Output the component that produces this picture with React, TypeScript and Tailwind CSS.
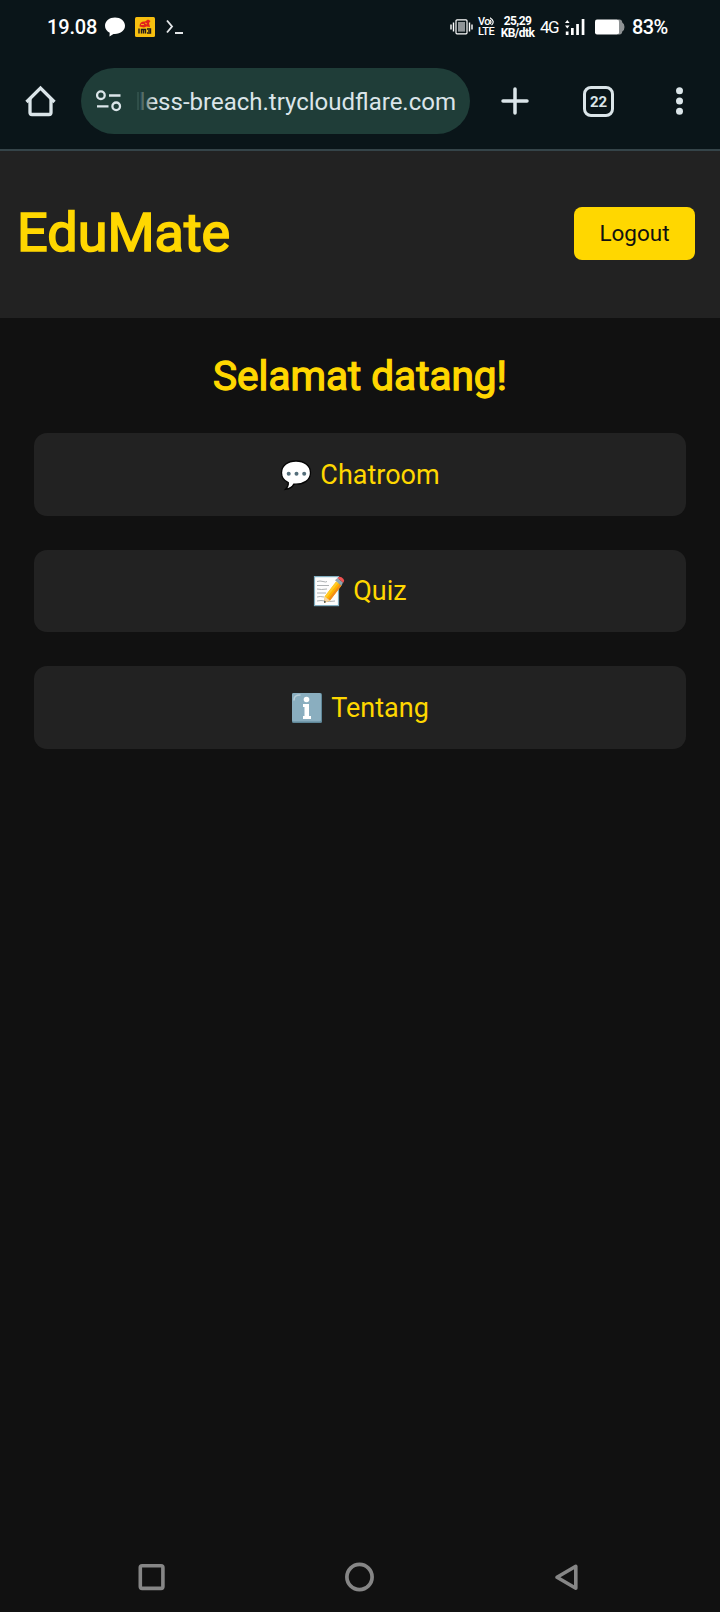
import React from "react";

const menuItems = [
  { label: "Chatroom", icon: <ChatIcon /> },
  { label: "Quiz", icon: <MemoIcon /> },
  { label: "Tentang", icon: <InfoIcon /> },
];

function ChatIcon() {
  return (
    <svg width="32" height="32" viewBox="0 0 32 32">
      <path
        d="M16 2C7.500 2 1.500 6.800 1.500 13.800c0 4.500 2.500 8 6.800 9.900.2 2.700-.8 4.700-2.800 6.600 4-.4 7-2.500 8.300-5.200 10.200.8 16.700-4.300 16.700-11.300C30.500 6.800 24.500 2 16 2z"
        fill="#fff"
        stroke="#050505"
        strokeWidth="1.300"
      />
      <circle cx="8.700" cy="14.700" r="2" fill="#546e7a" />
      <circle cx="16.500" cy="14.700" r="2" fill="#546e7a" />
      <circle cx="24.200" cy="14.700" r="2" fill="#546e7a" />
    </svg>
  );
}

function MemoIcon() {
  return (
    <svg width="32" height="32" viewBox="0 0 32 32">
      <rect x="1.500" y="1.600" width="24" height="29" fill="#fdfdfd" stroke="#82aec0" strokeWidth="1.200" />
      <g stroke="#a3a7a9" strokeWidth="0.900" fill="none">
        <path d="M4 6.500q3 -1 6 0t4 0M4 10.500h12M4 14q4 1 10 0M4 18h9M4 22q3 -1 7 0M4 26q4 -1 8 0t10 0" />
      </g>
      <path d="M23.200 6.500 28.500 10.500 17 25.500 11 28 11.700 21.500z" fill="#ffb300" />
      <path d="M23.200 6.500 25 7.900 13.500 23 11.700 21.500z" fill="#ffca28" />
      <path d="M26.800 9.200 28.500 10.500 17 25.500 15.200 24.200z" fill="#f28c1a" />
      <path d="M11.700 21.500 17 25.500 11 28z" fill="#f3d3a2" />
      <path d="M11.300 25.500 13.200 27 11 28z" fill="#37474f" />
      <path d="M22 5.200 24.500 3 30 7.500 28.500 10.700z" fill="#90a4ae" />
      <path d="M24.500 3Q26 .8 28.500 2.200L30.500 4Q32 5.800 30.300 7.700z" fill="#f05252" />
    </svg>
  );
}

function InfoIcon() {
  return (
    <svg width="32" height="32" viewBox="0 0 32 32">
      <rect x="1" y="1" width="30" height="30" rx="1.500" fill="#5f8798" />
      <rect x="1" y="1" width="29" height="28.500" rx="1.500" fill="#8aaebf" />
      <path d="M3 8Q3 3 9 3" stroke="#b9ced8" strokeWidth="1.600" fill="none" strokeLinecap="round" />
      <circle cx="15.500" cy="7.500" r="2.800" fill="#fff" />
      <path d="M12 12h6v12h2v3h-8v-3h1.500v-9H12z" fill="#fff" />
    </svg>
  );
}

const StatusBar = () => (
  <div className="flex h-[54px] items-center pl-[47px] text-white">
    <div className="w-[58px] text-[20px] leading-none font-medium tracking-[-0.150px]">19.08</div>
    <svg className="mr-[10px]" width="20" height="20" viewBox="0 0 20 20" fill="#fff">
      <path d="M10 .5C4.500.500 0 4 0 8.800c0 3 1.800 5.600 4.700 7L4.500 19.500l4-2.600C15 17.500 20 13.800 20 8.800 20 4 15.500.500 10 .5z" />
    </svg>
    <svg className="mr-[11px]" width="20" height="20" viewBox="0 0 20 20">
      <rect width="20" height="20" rx="1.500" fill="#f7bf0f" />
      <path d="M4.500 9.500C4.500 5.500 7 4 10 4.500L13 2.500 15.500 4 14 6 15 10 11.500 9.500 9 10.500z" fill="#e3221b" />
      <path d="M6 7.500h3M10 6l2 1" stroke="#f7bf0f" strokeWidth="0.900" />
      <path d="M4 11.500v5M6.500 16.500v-4h4v4M8.500 12.500v4M12 12h3.500v4H12M13 14h2" stroke="#231a1a" strokeWidth="1.400" fill="none" />
    </svg>
    <svg width="18" height="16" viewBox="0 0 18 16" fill="none" stroke="#e3e6e8" strokeWidth="1.900">
      <path d="M1 1.500 6 7.500 1 13.500M9 14h8" />
    </svg>

    <svg className="mr-[5px] ml-[266px]" width="23" height="18" viewBox="0 0 23 18">
      <rect x="6" y="1.800" width="11" height="14" rx="1" fill="#0a1519" stroke="#fff" strokeWidth="1.200" />
      <rect x="8" y="4" width="7" height="9.600" fill="#909598" />
      <path d="M1 6.500v5M3.500 4.500v9M19.500 4.500v9M22 6.500v5" stroke="#fff" strokeWidth="1.400" />
    </svg>
    <div className="flex w-[22px] flex-col text-[11px] leading-[10px] font-medium">
      <div className="flex">
        <span className="tracking-[-0.700px]">Vo</span>
        <svg width="6" height="9" viewBox="0 0 6 9" fill="none" stroke="#fff" strokeWidth="1.200">
          <path d="M0 3q2 2 0 4M0 .8q5.500 3.400 1.500 7.400" />
        </svg>
      </div>
      <span className="tracking-[-0.400px]">LTE</span>
    </div>
    <div className="w-[35px] pb-px text-center text-[12px] leading-[12px] font-bold tracking-[-0.550px]">
      <div>25,29</div>
      <div>KB/dtk</div>
    </div>
    <div className="ml-[5px] w-[25px] text-[17px] leading-none tracking-[-1.500px]">4G</div>
    <svg width="20" height="18" viewBox="0 0 20 18" fill="#fff">
      <path d="M0 5 2.300 2 4.600 5zM0 7.500h4.600L2.300 10.500z" />
      <rect x="0.800" y="13.500" width="2.700" height="3.500" />
      <rect x="6" y="10" width="2.700" height="7" />
      <rect x="11.200" y="6" width="2.700" height="11" />
      <rect x="16.700" y="1" width="2.700" height="16" />
    </svg>
    <svg className="mr-[7px] ml-[10px]" width="30" height="16" viewBox="0 0 30 16">
      <path d="M23 .5h1.500Q27 .5 27.300 3.500 29.500 4.500 29.500 8T27.300 12.500Q27 15.500 24.500 15.500H23z" fill="#8e9294" />
      <rect y="0.500" width="24" height="15" rx="2" fill="#fff" />
    </svg>
    <div className="text-[20px] leading-none font-medium tracking-[-0.600px]">83%</div>
  </div>
);

const BrowserBar = () => (
  <div className="flex h-[97px] items-center border-b-2 border-[#354449] pb-px pl-[25px] text-[#dbe5e9]">
    <svg width="31" height="32" viewBox="0 0 31 32" fill="none" stroke="currentColor" strokeWidth="3.300">
      <path d="M1.500 17 15.500 3 29.500 17" />
      <path d="M5 14v13.500Q5 29.500 7 29.500H24Q26 29.500 26 27.500V14" />
    </svg>
    <div className="ml-[25px] flex h-[66px] w-[389px] items-center rounded-full bg-[#1f3d38] pl-[15px]">
      <svg width="26" height="22" viewBox="0 0 26 22" fill="none" stroke="currentColor" strokeWidth="2.300">
        <circle cx="4.900" cy="5.200" r="3.800" />
        <path d="M13 5.500h11.500M1 16.300h11.500" />
        <circle cx="20.200" cy="16.300" r="3.800" />
      </svg>
      {/* the start of a long address fades out on the left */}
      <div className="relative ml-[15px] flex w-[319px] items-center justify-between pt-px">
        <span className="mb-0.5 h-[18px] w-0.5 bg-[#2f4f49]" />
        <span className="text-[24px] leading-8 whitespace-nowrap">less-breach.trycloudflare.com</span>
        <div className="absolute inset-y-0 left-1 w-3.5 bg-linear-to-r from-[#1f3d38]/80 to-transparent" />
      </div>
    </div>
    <svg className="ml-[31px]" width="28" height="28" viewBox="0 0 28 28" stroke="currentColor" strokeWidth="3.500" strokeLinecap="round">
      <path d="M14 2v24M2 14h24" />
    </svg>
    <div className="ml-[54px] flex size-[31px] items-center justify-center rounded-[8px] border-[3.500px] border-[#dbe5e9] pt-0.5 text-[15px] leading-none font-bold">
      22
    </div>
    <svg className="ml-[62px]" width="7" height="28" viewBox="0 0 7 28" fill="currentColor">
      <circle cx="3.500" cy="3.700" r="3.500" />
      <circle cx="3.500" cy="14" r="3.500" />
      <circle cx="3.500" cy="24.300" r="3.500" />
    </svg>
  </div>
);

const NavBar = () => (
  <div className="flex h-[71px] items-center pl-[138px]">
    <svg width="27" height="30" viewBox="0 0 27 30" fill="none" stroke="#868686" strokeWidth="3.600">
      <rect x="2.300" y="3.800" width="22.600" height="22.600" rx="1.800" />
    </svg>
    <svg className="ml-[180px]" width="30" height="30" viewBox="0 0 30 30" fill="none" stroke="#868686" strokeWidth="3.700">
      <circle cx="14.500" cy="15" r="12.600" />
    </svg>
    <svg className="ml-[179px]" width="25" height="30" viewBox="0 0 25 30" fill="none" stroke="#868686" strokeWidth="3.600" strokeLinejoin="round">
      <path d="M21.800 4.300V26.300L3 15.300z" />
    </svg>
  </div>
);

const App = () => {
  return (
    <div className="flex h-[1612px] w-[720px] flex-col overflow-hidden bg-[#111111] font-['Roboto',sans-serif]">
      <div className="bg-[#0a1519]">
        <StatusBar />
        <BrowserBar />
      </div>

      <header className="flex h-[167px] items-center justify-between bg-[#222222] pr-[25px] pb-0.5 pl-[17px]">
        <h1 className="pb-0.5 text-[54px] leading-none font-normal text-[#ffd700] [-webkit-text-stroke:1.700px_#ffd700]">
          EduMate
        </h1>
        <button className="h-[53px] w-[121px] rounded-[8px] bg-[#ffd700] text-[22.500px] text-[#111111]">
          Logout
        </button>
      </header>

      <main className="flex flex-1 flex-col items-center px-[34px] pt-[33px]">
        <h2 className="text-[40.500px] leading-[50px] font-normal text-[#ffd700] [-webkit-text-stroke:1.300px_#ffd700]">
          Selamat datang!
        </h2>
        <div className="mt-[32px] flex w-full flex-col gap-[34px]">
          {menuItems.map((item) => (
            <a
              key={item.label}
              className="flex h-[82.500px] items-center justify-center gap-2 rounded-[13px] bg-[#222222] pt-px text-[27px] text-[#ffd700]"
            >
              {item.icon}
              <span>{item.label}</span>
            </a>
          ))}
        </div>
      </main>

      <NavBar />
    </div>
  );
};

export default App;
